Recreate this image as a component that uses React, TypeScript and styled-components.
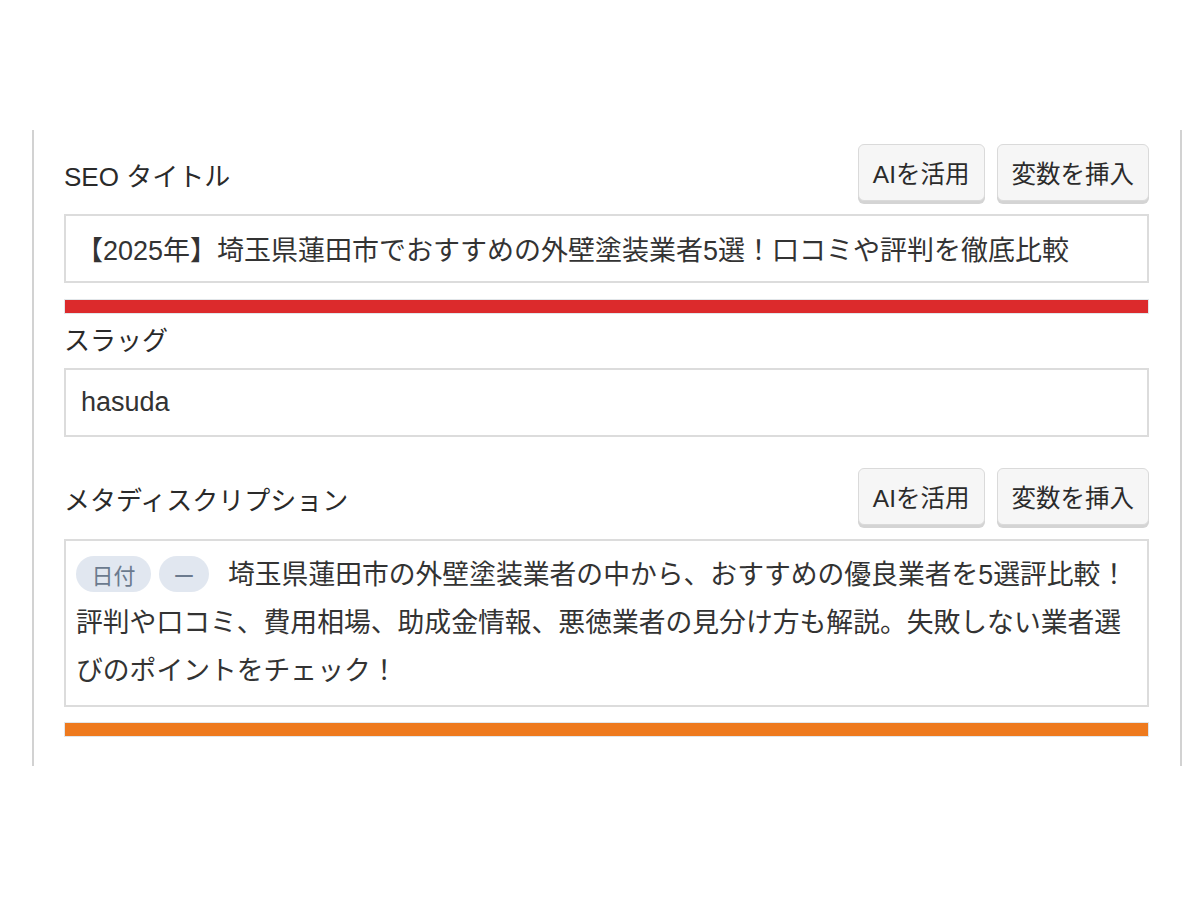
import React from "react";
import styled, { createGlobalStyle } from "styled-components";

const Global = createGlobalStyle`
  html, body { margin: 0; padding: 0; background: #ffffff; }
  body { font-family: "Liberation Sans", "Noto Sans CJK JP", sans-serif; color: #2b2b2b; }
  * { box-sizing: border-box; }
`;

const Page = styled.div`
  padding-top: 130px;
  padding-left: 32px;
  width: 1200px;
`;

const Panel = styled.div`
  width: 1150px;
  border-left: 2px solid #d2d2d2;
  border-right: 2px solid #d2d2d2;
  padding: 14px 31px 29px 30px;
  display: flex;
  flex-direction: column;
`;

const HeaderRow = styled.div<{ $mt?: number }>`
  display: flex;
  align-items: center;
  justify-content: space-between;
  height: 60px;
  margin-top: ${(p) => p.$mt ?? 0}px;
`;

const Label = styled.div<{ $mt?: number; $pt?: number }>`
  font-size: 26px;
  line-height: 36px;
  color: #2a2a2a;
  margin-top: ${(p) => p.$mt ?? 0}px;
  padding-top: ${(p) => p.$pt ?? 3}px;
`;

const Buttons = styled.div`
  display: flex;
  gap: 12px;
  align-self: flex-start;
`;

const Button = styled.button`
  font-family: "Liberation Sans", "Noto Sans CJK JP", sans-serif;
  font-size: 24.5px;
  color: #2b2b2b;
  height: 57px;
  padding: 0 14px;
  background: #f6f6f6;
  border: 1px solid #dadada;
  border-radius: 6px;
  box-shadow: 0 3px 0 #d4d4d4;
  cursor: pointer;
`;

const Input = styled.div<{ $mt: number }>`
  height: 69px;
  margin-top: ${(p) => p.$mt}px;
  border: 2px solid #dcdcdc;
  padding: 0 12px 0 10px;
  display: flex;
  align-items: center;
  font-size: 27px;
  color: #333333;
  white-space: nowrap;
`;

const SlugInput = styled(Input)`
  padding-left: 15px;
`;

const TextArea = styled.div`
  margin-top: 11px;
  height: 168px;
  border: 2px solid #dcdcdc;
  padding: 10px 10px 10px 10px;
  font-size: 26.8px;
  line-height: 48px;
  color: #333333;
`;

const Chip = styled.span<{ $w: number }>`
  display: inline-flex;
  align-items: center;
  justify-content: center;
  width: ${(p) => p.$w}px;
  height: 36px;
  border-radius: 18px;
  background: #e1e7f0;
  color: #6b7a8e;
  font-size: 22px;
  line-height: 36px;
  font-family: "Noto Sans CJK JP", sans-serif;
  vertical-align: middle;
  margin-right: 8px;
  position: relative;
  top: -3px;
`;

const Body = styled.span`
  margin-left: 11px;
`;

const Track = styled.div<{ $mt: number }>`
  margin-top: ${(p) => p.$mt}px;
  height: 15px;
  border: 1px solid #e2e6e9;
  background: #f2f2f2;
`;

const Fill = styled.div<{ $color: string }>`
  height: 100%;
  background: ${(p) => p.$color};
`;

export default function App() {
  return (
    <>
      <Global />
      <Page>
        <Panel>
          <HeaderRow>
            <Label $pt={6}>SEO タイトル</Label>
            <Buttons>
              <Button>AIを活用</Button>
              <Button>変数を挿入</Button>
            </Buttons>
          </HeaderRow>
          <Input $mt={10}>【2025年】埼玉県蓮田市でおすすめの外壁塗装業者5選！口コミや評判を徹底比較</Input>
          <Track $mt={16}>
            <Fill $color="#dc2a2c" style={{ width: "100%" }} />
          </Track>
          <Label $mt={6}>スラッグ</Label>
          <SlugInput $mt={9}>hasuda</SlugInput>
          <HeaderRow $mt={31}>
            <Label $pt={5}>メタディスクリプション</Label>
            <Buttons>
              <Button>AIを活用</Button>
              <Button>変数を挿入</Button>
            </Buttons>
          </HeaderRow>
          <TextArea>
            <Chip $w={75}>日付</Chip>
            <Chip $w={50}>ー</Chip>
            <Body>埼玉県蓮田市の外壁塗装業者の中から、おすすめの優良業者を5選評比較！評判や口コミ、費用相場、助成金情報、悪徳業者の見分け方も解説。失敗しない業者選びのポイントをチェック！</Body>
          </TextArea>
          <Track $mt={15}>
            <Fill $color="#ee7a1e" style={{ width: "100%" }} />
          </Track>
        </Panel>
      </Page>
    </>
  );
}
